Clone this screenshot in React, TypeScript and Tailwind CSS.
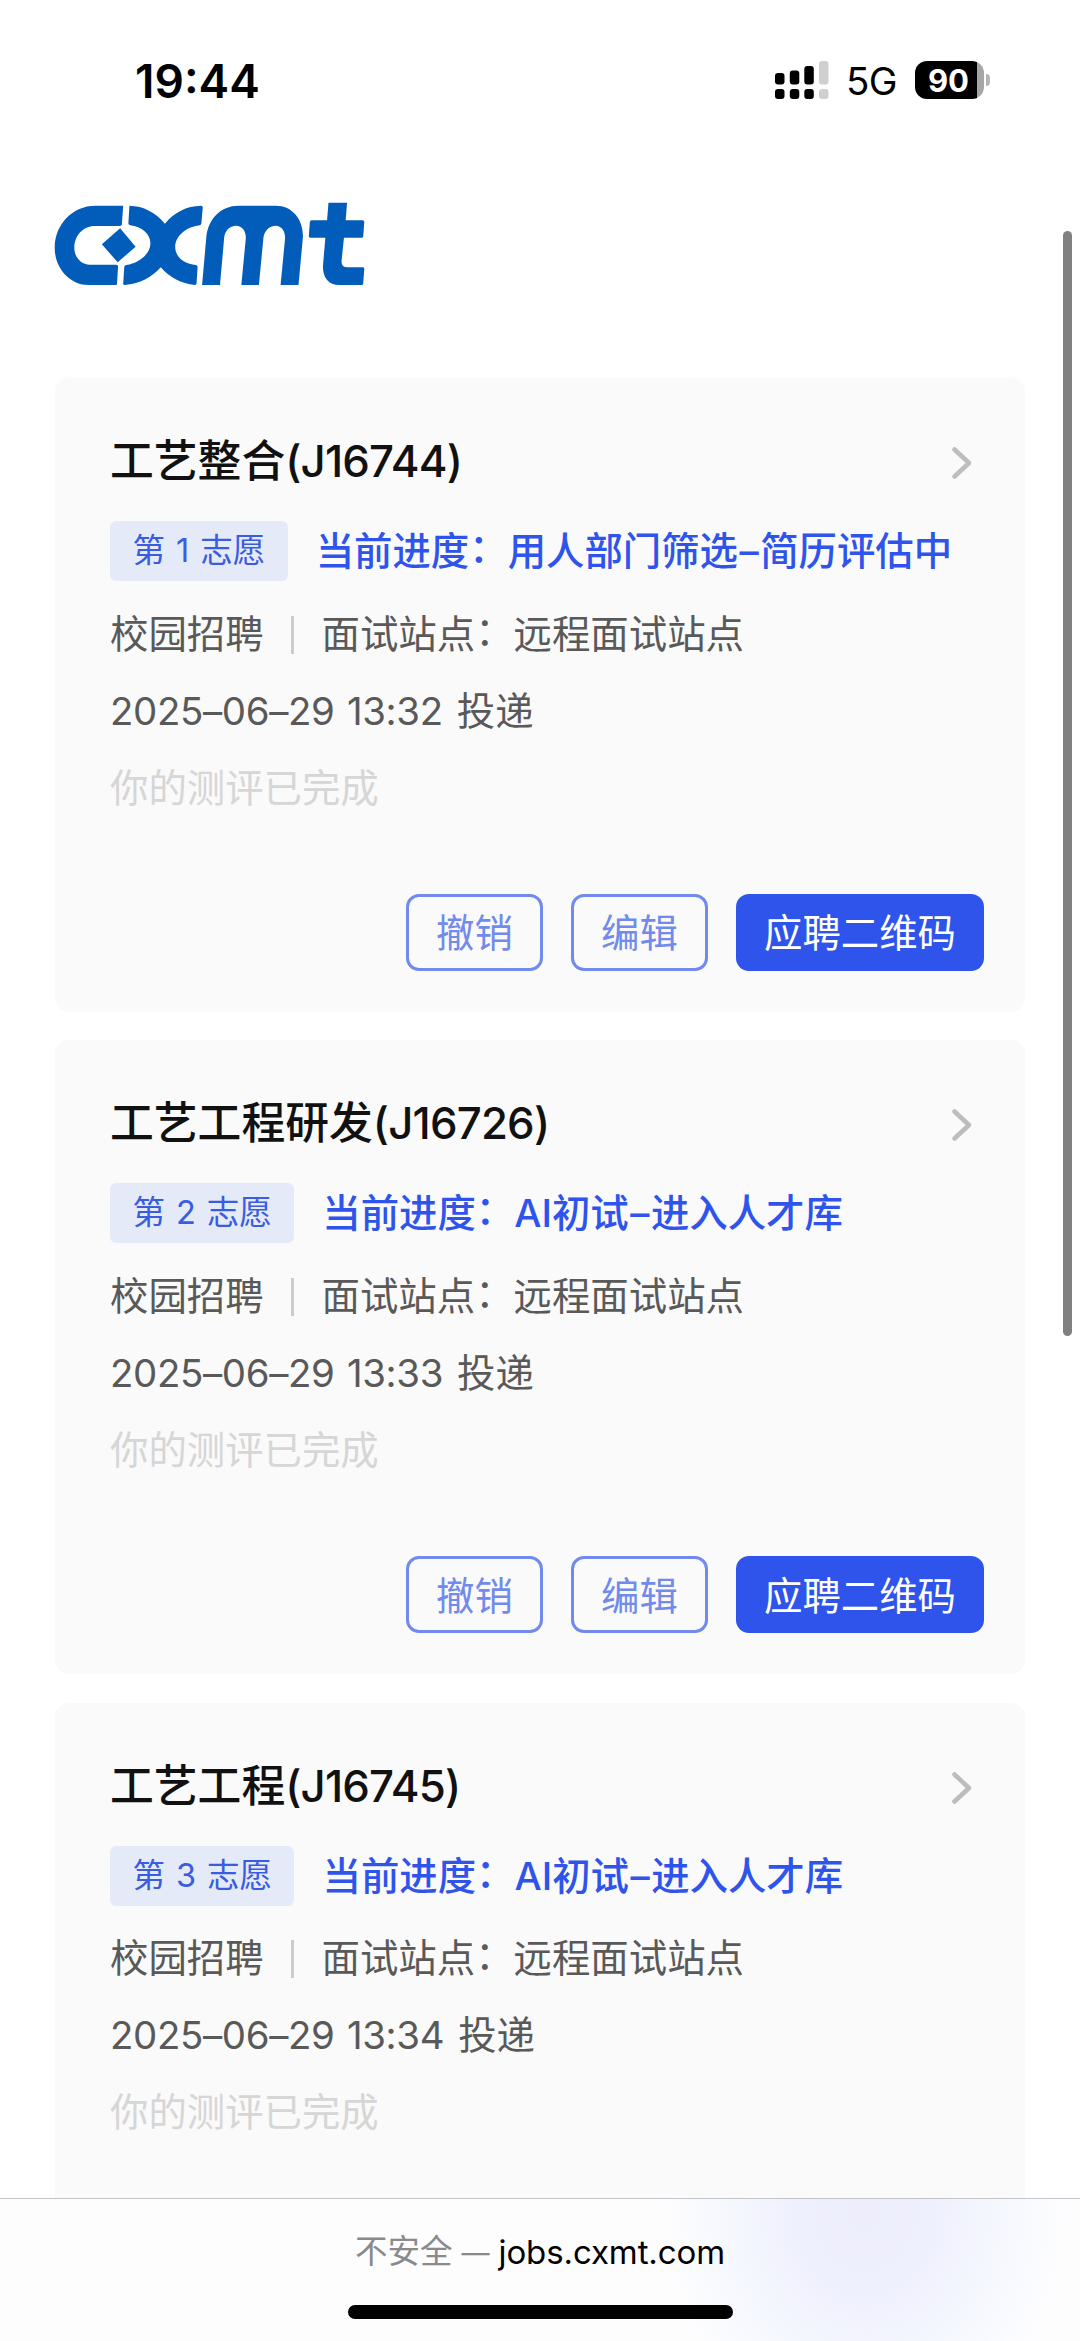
import React from "react";

type Application = {
  name: string;
  code: string;
  order: number;
  progress: [string, string];
  time: string;
};

const applications: Application[] = [
  { name: "工艺整合", code: "(J16744)", order: 1, progress: ["用人部门筛选", "简历评估中"], time: "2025–06–29 13:32" },
  { name: "工艺工程研发", code: "(J16726)", order: 2, progress: ["AI初试", "进入人才库"], time: "2025–06–29 13:33" },
  { name: "工艺工程", code: "(J16745)", order: 3, progress: ["AI初试", "进入人才库"], time: "2025–06–29 13:34" },
];

function StatusBar() {
  return (
    <div className="flex h-[160px] shrink-0 items-start justify-between pl-[135px] pr-[90px] text-black">
      <div className="mt-[53px] text-[46px] font-semibold leading-[56px]">19:44</div>
      <div className="mt-[61px] flex h-[38px] items-center">
        <svg className="h-[38px] w-[54px]" viewBox="0 0 54 38">
          <g fill="#000">
            <rect x="0" y="12" width="9.5" height="11.5" rx="3" />
            <rect x="14.8" y="9.5" width="9.5" height="14" rx="3" />
            <rect x="29.3" y="5" width="9.5" height="18.5" rx="3" />
            <rect x="0" y="28" width="9.5" height="10" rx="3" />
            <rect x="14.8" y="28" width="9.5" height="10" rx="3" />
            <rect x="29.3" y="28" width="9.5" height="10" rx="3" />
          </g>
          <g fill="#cfcfcf">
            <rect x="44" y="0" width="9.5" height="23.5" rx="3" />
            <rect x="44" y="28" width="9.5" height="10" rx="3" />
          </g>
        </svg>
        <span className="ml-[17px] w-[50px] whitespace-nowrap pt-[2px] text-[38.5px] leading-[38px] tracking-[-0.7px]">5G</span>
        <div className="ml-[19px] flex h-[38px] w-[69px] items-center justify-center rounded-[12px] bg-[linear-gradient(to_right,#000_62px,#a6a6a6_62px)] pr-[2px] pt-px text-[31px] font-bold leading-[38px] text-white">
          90
        </div>
        <div className="ml-[2px] h-[12px] w-[4px] rounded-r-[4px] bg-[#b5b5b5]" />
      </div>
    </div>
  );
}

function Logo() {
  return (
    <svg className="h-[84px] w-[312px]" viewBox="158 547 906 252" preserveAspectRatio="none" fill="#025cba">
      <path d="M359 558H278C212 558 160 614 160 684C160 746 204 796 258 796H337Q341 796 341 792L344 740Q344 735 339 735H262C236 735 217 712 217 684C217 648 243 619 276 619H350Q355 619 355 614Z" />
      <path d="M350 626L395 681L343 728L297 674Z" />
      <path d="M377 558C417 559 454 578 480 612C506 578 543 559 585 558Q590 558 590 563L586 611Q586 616 581 617C541 622 510 650 510 682C510 711 535 733 570 736Q575 737 575 742L572 791Q572 796 567 796C528 792 494 774 468 743C441 775 404 793 364 796Q359 796 359 792L362 742Q362 737 368 736C407 730 438 702 438 671C438 643 413 621 379 617Q374 616 374 611Z" />
      <path d="M588 796L600 656C604 599 641 558 694 558H802C850 558 881 598 881 650L868 796H816L829 656C830 634 818 618 802 618C783 618 768 634 766 656L753 796H702L715 656C716 634 704 618 687 618C668 618 653 634 652 656L640 796Z" />
      <path d="M955 549H1009L1005 602H1054Q1059 602 1059 607L1056 650Q1056 654 1052 654H1000L993 724Q992 743 1010 743H1055Q1059 743 1059 748L1056 791Q1056 796 1052 796H986C955 796 938 773 939 738L946 654H902Q898 654 898 650L901 607Q902 602 906 602H951Z" />
    </svg>
  );
}

function Actions() {
  return (
    <div className="mt-[67px] flex justify-end gap-[28px] text-[38.4px]">
      <button className="h-[77px] w-[137px] rounded-[13px] border-[3px] border-[#718aec] pt-[2px] leading-none text-[#718aec]">撤销</button>
      <button className="h-[77px] w-[137px] rounded-[13px] border-[3px] border-[#718aec] pt-[2px] leading-none text-[#718aec]">编辑</button>
      <button className="h-[77px] w-[248px] whitespace-nowrap rounded-[13px] bg-[#2f54eb] pt-[2px] leading-none text-white">应聘二维码</button>
    </div>
  );
}

// Raises the full-width colon to the optical middle of the line.
function Colon() {
  return <span className="relative -top-[3px]">：</span>;
}

function ApplicationCard({ item, showActions }: { item: Application; showActions: boolean }) {
  return (
    <section className="flex h-[634px] shrink-0 flex-col rounded-[14px] bg-[#fafafa] pl-[55px] pr-[41px] pt-[54px]">
      <div className="flex h-[60px] items-center justify-between">
        <h2 className="whitespace-nowrap text-[43.8px] font-medium leading-[60px] text-[#111]">
          {item.name}
          <span className="tracking-[-0.8px]">{item.code}</span>
        </h2>
        <svg className="mr-[11px] mt-[2px] h-[34px] w-[22px]" viewBox="0 0 22 34" fill="none" stroke="#bdbdbd" strokeWidth="4.6" strokeLinecap="round" strokeLinejoin="round">
          <path d="M3.500 3.500L18 17L3.500 30.500" />
        </svg>
      </div>
      <div className="mt-[29px] flex h-[60px] items-center">
        <span className="flex h-[60px] items-center whitespace-nowrap rounded-[6px] bg-[#e5eaf9] px-[22.5px] pt-px text-[32.5px] text-[#3a5ce0] [word-spacing:1.8px]">
          第 {item.order} 志愿
        </span>
        <span className="ml-[28px] whitespace-nowrap pt-[2px] text-[38.4px] font-medium text-[#2f54eb]">
          当前进度<Colon />{item.progress[0]}
          <span className="mx-[1.5px]">–</span>
          {item.progress[1]}
        </span>
      </div>
      <div className="mt-[15px] flex h-[77px] items-center whitespace-nowrap text-[38.4px] text-[#595959]">
        <span>校园招聘</span>
        <span className="mx-[27.5px] h-[38px] w-[3px] bg-[#cccccc]" />
        <span>面试站点<Colon />远程面试站点</span>
      </div>
      <div className="flex h-[77px] items-center whitespace-nowrap text-[38.4px] text-[#595959]">
        <span className="tracking-[-0.35px] [word-spacing:2px]">{item.time}</span>
        <span className="ml-[14px]">投递</span>
      </div>
      <div className="flex h-[77px] items-center whitespace-nowrap text-[38.4px] text-[#d6d6d6]">你的测评已完成</div>
      {showActions && <Actions />}
    </section>
  );
}

function BrowserBar() {
  return (
    <footer className="flex h-[143px] shrink-0 flex-col items-center border-t border-[#c4c4cb] bg-[#fdfdfe] bg-[radial-gradient(ellipse_200px_240px_at_865px_10px,#ededfc_0%,#eff0fd_35%,#f6f8fe_70%,transparent_100%)]">
      <div className="mt-[29px] flex h-[49px] items-center whitespace-nowrap text-[32.5px] text-black">
        <span className="text-[#8a8a8e]">不安全</span>
        <span className="mx-[9px] text-[28px] text-[#8a8a8e]">—</span>
        <span className="text-[33px] tracking-[-0.1px]">jobs.cxmt.com</span>
      </div>
      <div className="mt-[28px] h-[14px] w-[385px] rounded-full bg-black" />
    </footer>
  );
}

export default function App() {
  return (
    <div className="relative flex h-[2341px] w-[1080px] flex-col overflow-hidden bg-white font-['Inter','Noto_Sans_CJK_SC',sans-serif]">
      <StatusBar />
      <header className="flex h-[218px] shrink-0 items-start pl-[54px] pt-[42px]">
        <Logo />
      </header>
      <main className="flex min-h-0 flex-1 flex-col gap-[28.3px] overflow-hidden px-[55px]">
        {applications.map((item, index) => (
          <ApplicationCard key={item.order} item={item} showActions={index < 2} />
        ))}
      </main>
      <BrowserBar />
      <div className="absolute right-[8px] top-[231px] h-[1105px] w-[9px] rounded-full bg-[#808080]" />
    </div>
  );
}
